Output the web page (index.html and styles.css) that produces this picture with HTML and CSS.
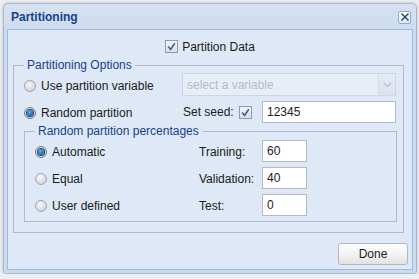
FILE: index.html
```html
<!DOCTYPE html>
<html lang="en">

<head>
    <meta charset="UTF-8">
    <title>Partitioning</title>
    <link rel="stylesheet" href="styles.css">
</head>

<body>
    <div class="window">
        <div class="titlebar">
            <span class="title">Partitioning</span>
            <span class="close">
                <svg width="10" height="10" viewBox="0 0 10 10"><path d="M1.5 1.5 L8.5 8.5 M8.5 1.5 L1.5 8.5" stroke="#1d3f78" stroke-width="1.4" fill="none"/></svg>
            </span>
        </div>
        <div class="panel">
            <div class="master">
                <span class="check"><svg width="11" height="11" viewBox="0 0 11 11"><path d="M2.2 5.6 L4.6 8.4 L8.8 2.2" stroke="#3a5e9e" stroke-width="1.6" fill="none"/></svg></span>
                <span>Partition Data</span>
            </div>

            <fieldset class="group outer">
                <legend>Partitioning Options</legend>
                <div class="row first">
                    <label class="opt"><span class="radio"></span>Use partition variable</label>
                    <div class="combo">
                        <span class="combo-text">select a variable</span>
                        <span class="trigger"><svg width="9" height="6" viewBox="0 0 9 6"><path d="M1 1 L4.5 4.5 L8 1" stroke="#b9c3d0" stroke-width="1.5" fill="none"/></svg></span>
                    </div>
                </div>
                <div class="row second">
                    <label class="opt"><span class="radio on"></span>Random partition</label>
                    <span class="seed-label">Set seed:</span>
                    <span class="check seed-check"><svg width="11" height="11" viewBox="0 0 11 11"><path d="M2.2 5.6 L4.6 8.4 L8.8 2.2" stroke="#3a5e9e" stroke-width="1.6" fill="none"/></svg></span>
                    <input class="field seed" type="text" value="12345">
                </div>

                <fieldset class="group inner">
                    <legend>Random partition percentages</legend>
                    <div class="pct">
                        <label class="opt wide"><span class="radio on"></span>Automatic</label>
                        <span class="pct-label">Training:</span>
                        <input class="field small" type="text" value="60">
                    </div>
                    <div class="pct">
                        <label class="opt wide"><span class="radio"></span>Equal</label>
                        <span class="pct-label">Validation:</span>
                        <input class="field small" type="text" value="40">
                    </div>
                    <div class="pct">
                        <label class="opt wide"><span class="radio"></span>User defined</label>
                        <span class="pct-label">Test:</span>
                        <input class="field small" type="text" value="0">
                    </div>
                </fieldset>
            </fieldset>

            <div class="footer">
                <button class="btn">Done</button>
            </div>
        </div>
    </div>
</body>

</html>
```

FILE: styles.css
```css
* {
    box-sizing: border-box;
    margin: 0;
    padding: 0;
}

body {
    background-color: #eeeeee;
    font-family: "Liberation Sans", Arial, sans-serif;
    font-size: 12px;
    color: #1a1a1a;
}

.window {
    width: 414px;
    height: 271px;
    margin: 3px 0 0 3px;
    border: 1px solid #a3bbdb;
    border-radius: 5px 5px 3px 3px;
    background: linear-gradient(#d6e2f2, #cddaec 30px);
    box-shadow: 0 0 3px rgba(0, 0, 0, 0.25);
    padding: 0 3px 3px 3px;
}

.titlebar {
    height: 25px;
    display: flex;
    align-items: center;
    justify-content: space-between;
    padding: 1px 2px 0 4px;
}

.title {
    font-weight: bold;
    color: #15428b;
}

.close {
    width: 13px;
    height: 13px;
    border: 1px solid #8eaad2;
    border-radius: 2px;
    background: linear-gradient(#ffffff, #dde7f5);
    display: flex;
    align-items: center;
    justify-content: center;
}

.panel {
    height: 241px;
    border: 1px solid #99bbe8;
    background-color: #dfe8f6;
    padding: 10px 0 4px 0;
}

.master {
    height: 13px;
    display: flex;
    align-items: center;
    justify-content: center;
    gap: 4px;
}

.check {
    width: 13px;
    height: 13px;
    border: 1px solid #8d9ab0;
    background: linear-gradient(#f2f4f8, #d9dee7);
    display: flex;
    align-items: center;
    justify-content: center;
}

.group {
    border: 1px solid #b5b8c8;
    padding: 1px 6px 10px 10px;
}

.group legend {
    color: #15428b;
    line-height: 14px;
    padding: 0 3px;
}

.outer {
    width: 391px;
    margin: 5px 0 0 5px;
}

.row {
    display: flex;
    align-items: center;
}

.row.first {
    height: 23px;
}

.row.second {
    height: 22px;
    margin-top: 5px;
}

.opt {
    width: 158px;
    display: flex;
    align-items: center;
    gap: 5px;
    padding-top: 2px;
}

.opt.wide {
    width: 164px;
}

.radio {
    width: 12px;
    height: 12px;
    border: 1px solid #a0a6ae;
    border-radius: 50%;
    background: radial-gradient(circle at 40% 35%, #f8f8f8, #cdd0d5 85%);
    display: flex;
    align-items: center;
    justify-content: center;
}

.radio.on {
    border-color: #6f7c8c;
}

.radio.on::after {
    content: "";
    width: 6px;
    height: 6px;
    border-radius: 50%;
    background: radial-gradient(circle at 40% 35%, #53b0ee, #0a4a88);
    box-shadow: 0 0 0 1px #243f62;
}

.combo {
    width: 214px;
    height: 23px;
    display: flex;
    border: 1px solid #cdd6e2;
    background-color: #e8eef8;
}

.combo-text {
    flex: 1;
    color: #b3bcc8;
    padding: 4px 0 0 4px;
}

.trigger {
    width: 17px;
    border-left: 1px solid #d4dbe6;
    background: linear-gradient(#e6ecf5, #dbe2ed);
    display: flex;
    align-items: center;
    justify-content: center;
}

.seed-label {
    margin-left: 1px;
    width: 56px;
}

.seed-check {
    margin-right: 10px;
}

.field {
    height: 22px;
    border: 1px solid #b5b8c8;
    background-color: #ffffff;
    font-family: "Liberation Sans", Arial, sans-serif;
    font-size: 12px;
    color: #1a1a1a;
    padding: 0 4px;
    outline: none;
}

.seed {
    width: 134px;
}

.inner {
    width: 373px;
    margin-top: 1px;
    padding: 2px 6px 5px 10px;
}

.pct {
    height: 22px;
    display: flex;
    align-items: center;
}

.pct + .pct {
    margin-top: 5px;
}

.pct-label {
    width: 63px;
    padding-top: 2px;
}

.small {
    width: 45px;
}

.footer {
    display: flex;
    justify-content: flex-end;
    padding: 10px 4px 0 0;
}

.btn {
    width: 70px;
    height: 22px;
    border: 1px solid #b3b6bd;
    border-radius: 3px;
    background: linear-gradient(#ffffff, #f3f3f3 50%, #e1e1e1);
    font-family: "Liberation Sans", Arial, sans-serif;
    font-size: 12px;
    color: #1a1a1a;
}
```
